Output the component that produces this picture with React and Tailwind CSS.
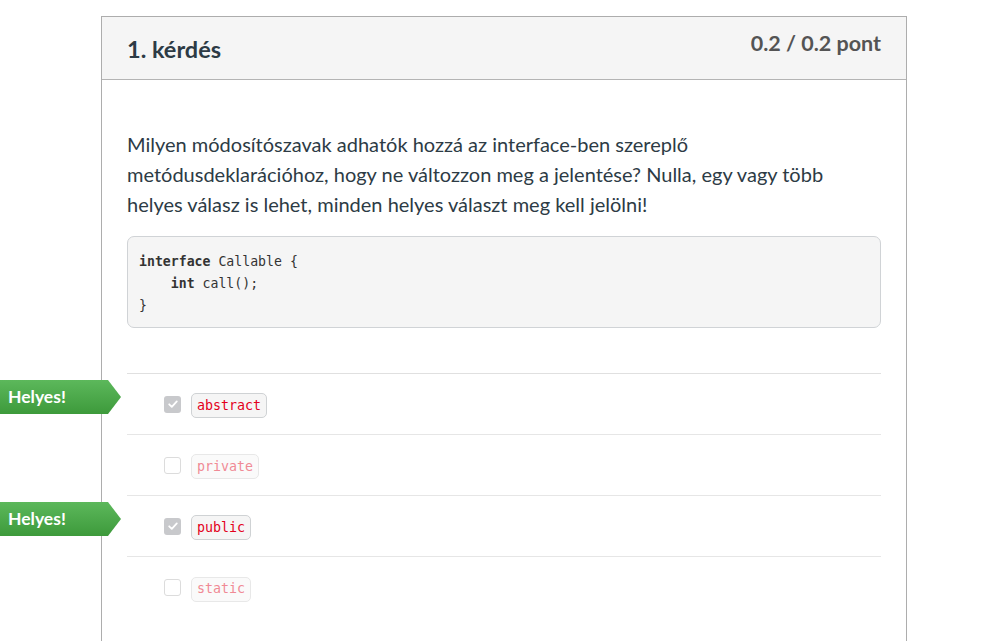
import React from "react";

const answers = [
  { text: "abstract", checked: true, correct: true },
  { text: "private", checked: false, correct: false },
  { text: "public", checked: true, correct: true },
  { text: "static", checked: false, correct: false },
];

function Flag() {
  return (
    <div className="absolute left-[-127px] top-[6px] h-[34px] w-[121px] [clip-path:polygon(0_0,108px_0,121px_50%,108px_100%,0_100%)] bg-gradient-to-b from-[#5cb85b] to-[#3d9a3b] flex items-center pl-[8px]">
      <span className="text-white font-bold text-[17.5px] leading-none [font-family:Lato,sans-serif]">Helyes!</span>
    </div>
  );
}

function Checkbox({ checked }) {
  if (checked) {
    return (
      <div className="w-[17px] h-[17px] rounded-[3px] bg-[#c8c9cc] flex items-center justify-center">
        <svg width="12" height="12" viewBox="0 0 12 12" fill="none">
          <path d="M2.2 6.3 L4.8 8.8 L9.8 3.4" stroke="white" strokeWidth="1.8" strokeLinecap="round" strokeLinejoin="round" />
        </svg>
      </div>
    );
  }
  return <div className="w-[17px] h-[17px] rounded-[3px] border border-[#dcdcdc] bg-white" />;
}

export default function App() {
  return (
    <div className="bg-white w-[1005px] h-[641px] overflow-hidden [font-family:Lato,sans-serif]">
      <div className="ml-[101px] mt-[16px] w-[806px] border border-[#adadad] border-b-0 h-[700px]">
        <div className="h-[63px] bg-[#f5f5f5] border-b border-[#b4b4b4] flex justify-between px-[25px]">
          <h2 className="text-[23.5px] font-bold text-[#2d3b45] pt-[18px] leading-[28px]">1. kérdés</h2>
          <div className="text-[21.5px] font-bold text-[#545454] pt-[12px] leading-[28px]">0.2 / 0.2 pont</div>
        </div>
        <div className="px-[25px] pt-[49px]">
          <p className="text-[20px] leading-[30px] text-[#2d3b45] pr-[20px]">
            Milyen módosítószavak adhatók hozzá az interface-ben szereplő metódusdeklarációhoz, hogy ne változzon meg a jelentése? Nulla, egy vagy több helyes válasz is lehet, minden helyes választ meg kell jelölni!
          </p>
          <pre className="mt-[17px] bg-[#f5f5f5] border border-[#d0d3d6] rounded-[7px] px-[11px] pt-[14px] pb-[10px] text-[13.2px] leading-[22px] text-[#333] [font-family:'DejaVu_Sans_Mono',monospace]">
            <b>interface</b> Callable {"{"}
            {"\n    "}<b>int</b> call();
            {"\n}"}
          </pre>
          <div className="mt-[45px] border-t border-[#e0e0e0]">
            {answers.map((a, i) => (
              <div key={a.text} className={"relative h-[61px] flex items-center pl-[37px] gap-[10px] " + (i < answers.length - 1 ? "border-b border-[#e6e6e6]" : "")}>
                {a.correct && <Flag />}
                <Checkbox checked={a.checked} />
                <span className={"mt-[3px] rounded-[5px] border px-[5px] h-[25px] flex items-center text-[13.3px] [font-family:'DejaVu_Sans_Mono',monospace] " + (a.checked ? "bg-[#f5f5f5] border-[#cfd2d4] text-[#e3001b]" : "bg-[#fafafa] border-[#e8e8e8] text-[#f08a95]")}>
                  {a.text}
                </span>
              </div>
            ))}
          </div>
        </div>
      </div>
    </div>
  );
}
